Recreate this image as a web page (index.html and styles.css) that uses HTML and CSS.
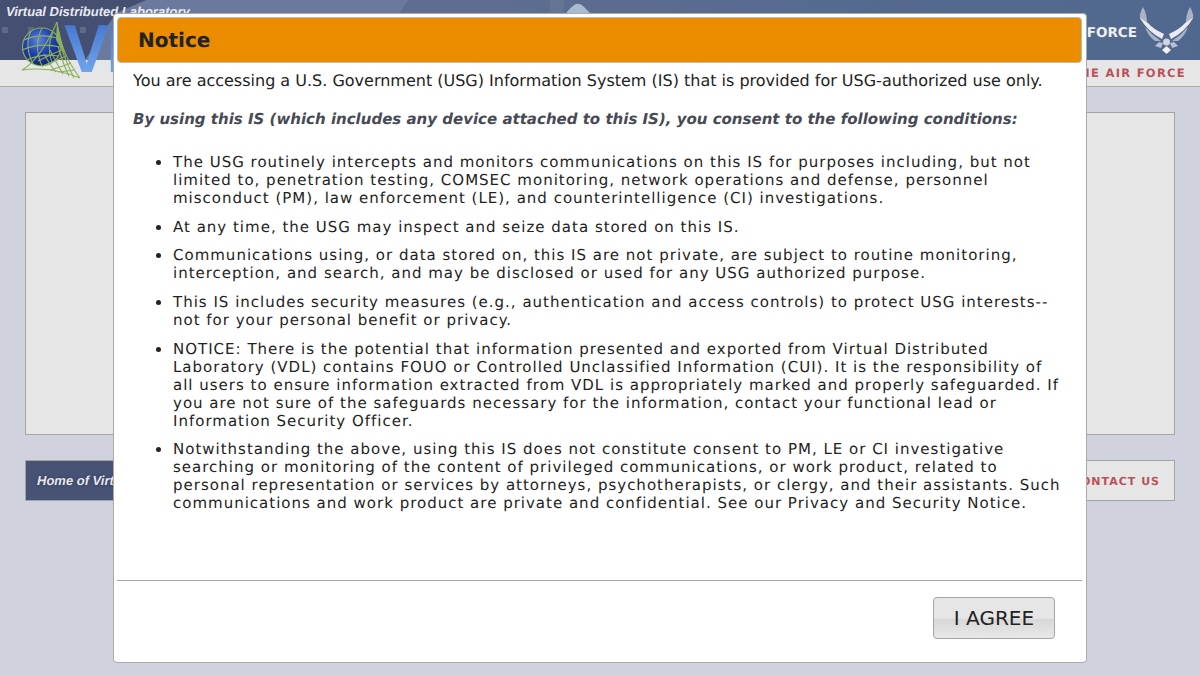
FILE: index.html
```html
<!DOCTYPE html>
<html lang="en">
<head>
<meta charset="utf-8">
<title>Virtual Distributed Laboratory</title>
<link rel="stylesheet" href="styles.css">
</head>
<body>
<header class="banner">
  <div class="banner-top">
    <svg class="banner-art" width="1200" height="60" viewBox="0 0 1200 60">
      <polygon points="146,0 408,0 370,60 85,60 116,13" fill="#6b7a9c"/>
      <polygon points="0,0 146,0 116,13 85,60 0,60" fill="#454f71"/>
      <rect x="550" y="0" width="14" height="13" fill="#ffffff" opacity="0.06"/>
      <path d="M566 13 Q572 6 576 4 Q580 3 583 6 L590 13 Z" fill="#a9bccf"/>
      <rect x="2" y="27" width="6" height="6" fill="#5d6786"/>
      <rect x="28" y="27" width="6" height="6" fill="#5d6786"/>
      <rect x="80" y="27" width="6" height="6" fill="#5d6786"/>
    </svg>
    <div class="site-name">Virtual Distributed Laboratory</div>
    <svg class="logo" width="113" height="87" viewBox="0 0 113 87">
      <defs>
        <radialGradient id="globe" cx="0.42" cy="0.32" r="0.75">
          <stop offset="0" stop-color="#5f86e0"/>
          <stop offset="0.45" stop-color="#2243b4"/>
          <stop offset="1" stop-color="#0e1f6a"/>
        </radialGradient>
        <linearGradient id="vee" x1="0" y1="0" x2="0" y2="1">
          <stop offset="0" stop-color="#3d6cc8"/>
          <stop offset="1" stop-color="#7ab2f4"/>
        </linearGradient>
      </defs>
      <text class="logo-word" x="64" y="72" fill="url(#vee)">VDL</text>
      <circle cx="41.5" cy="47" r="19" fill="url(#globe)"/>
      <g fill="none" stroke="#8db05a" stroke-width="1.1">
        <circle cx="41.5" cy="47" r="19"/>
        <path d="M31 31 Q24 46 33 64 M42 28 Q33 46 42 66 M53 32 Q46 48 52 62"/>
        <path d="M24 40 Q40 33 57 38 M22 50 Q40 42 60 47 M27 60 Q42 53 58 56"/>
        <path d="M22 70 Q50 66 80 78 M57 22 Q60 52 80 78"/>
        <path d="M22 70 Q40 60 57 22"/>
        <path d="M44 54 Q52 68 56 72 M50 50 Q58 66 63 74 M58 46 Q63 64 69 76 M62 50 Q68 66 74 78"/>
        <path d="M42 66 Q58 60 66 56 M50 70 Q64 66 71 63 M58 72 Q68 71 75 70 M38 61 Q52 54 62 50"/>
      </g>
      <path d="M57 22 Q61 40 66 56 Q58 44 56 40 Z" fill="#8db05a"/>
    </svg>
    <div class="brand">
      <span class="brand-word">FORCE</span>
      <svg class="wings" width="55" height="50" viewBox="0 0 55 50">
        <path d="M4 2 Q0 9 1 14 L8 18 Q8 9 4 2 Z" fill="#a8b4c6"/>
        <path d="M51 2 Q55 9 54 14 L47 18 Q47 9 51 2 Z" fill="#a8b4c6"/>
        <path d="M1 13 Q8 26 23 34 L25 29 Q14 24 9 18 Z" fill="#e9edf2"/>
        <path d="M54 13 Q47 26 32 34 L30 29 Q41 24 46 18 Z" fill="#e9edf2"/>
        <path d="M6 22 Q13 30 22 36 L16 36 Q9 31 6 22 Z" fill="#a8b4c6"/>
        <path d="M49 22 Q42 30 33 36 L39 36 Q46 31 49 22 Z" fill="#a8b4c6"/>
        <circle cx="27.5" cy="37" r="3.5" fill="#cfd6df"/>
        <path d="M24 38 L20 37 L16 41 L22 43 Z M31 38 L35 37 L39 41 L33 43 Z" fill="#b6c0ce"/>
        <path d="M27.5 41 L32 45 L27.5 49 L23 45 Z" fill="#eef1f5"/>
      </svg>
    </div>
  </div>
  <div class="banner-strip"><span class="strip-text">THE AIR FORCE</span></div>
</header>
<main class="page">
  <section class="content-box"></section>
  <footer class="footer">
    <div class="footer-home">Home of Virtual Distributed Laboratory</div>
    <div class="footer-contact">CONTACT US</div>
  </footer>
</main>
<div class="modal" role="dialog">
  <h1 class="modal-title">Notice</h1>
  <div class="modal-body">
    <p class="lead">You are accessing a U.S. Government (USG) Information System (IS) that is provided for USG-authorized use only.</p>
    <p class="consent">By using this IS (which includes any device attached to this IS), you consent to the following conditions:</p>
    <ul class="terms">
      <li>The USG routinely intercepts and monitors communications on this IS for purposes including, but not limited to, penetration testing, COMSEC monitoring, network operations and defense, personnel misconduct (PM), law enforcement (LE), and counterintelligence (CI) investigations.</li>
      <li>At any time, the USG may inspect and seize data stored on this IS.</li>
      <li>Communications using, or data stored on, this IS are not private, are subject to routine monitoring, interception, and search, and may be disclosed or used for any USG authorized purpose.</li>
      <li>This IS includes security measures (e.g., authentication and access controls) to protect USG interests--not for your personal benefit or privacy.</li>
      <li>NOTICE: There is the potential that information presented and exported from Virtual Distributed Laboratory (VDL) contains FOUO or Controlled Unclassified Information (CUI). It is the responsibility of all users to ensure information extracted from VDL is appropriately marked and properly safeguarded. If you are not sure of the safeguards necessary for the information, contact your functional lead or Information Security Officer.</li>
      <li>Notwithstanding the above, using this IS does not constitute consent to PM, LE or CI investigative searching or monitoring of the content of privileged communications, or work product, related to personal representation or services by attorneys, psychotherapists, or clergy, and their assistants. Such communications and work product are private and confidential. See our Privacy and Security Notice.</li>
    </ul>
  </div>
  <div class="modal-actions">
    <button class="agree" type="button">I AGREE</button>
  </div>
</div>
</body>
</html>
```
FILE: styles.css
```css
* { box-sizing: border-box; }
html, body { margin: 0; height: 100%; overflow: hidden; }
body {
  background: #d0d3dd; font-family: "DejaVu Sans", sans-serif; color: #222;
  text-rendering: geometricPrecision;
}

.banner { height: 87px; display: flex; flex-direction: column; }
.banner-top {
  height: 60px; display: flex; justify-content: flex-end; position: relative;
  background: linear-gradient(90deg, #5e6d90 0, #5e6d90 500px, #576a90 800px, #50688f 1200px);
}
.banner-art { position: absolute; left: 0; top: 0; }
.site-name {
  position: absolute; left: 6px; top: 4px;
  font: italic bold 13px "Liberation Sans", sans-serif; color: #e8ebf2;
}
.logo { position: absolute; left: 0; top: 0; }
.logo-word { font: bold 68px "Liberation Sans", sans-serif; letter-spacing: -3px; }
.brand { display: flex; align-items: flex-start; padding-right: 6px; position: relative; }
.brand-word { margin-top: 25px; font: bold 13.5px "DejaVu Sans", sans-serif; color: #eef0f4; }
.wings { margin-top: 5px; margin-left: 2px; }
.banner-strip {
  height: 27px; background: #e6e6e6; border-bottom: 1px solid #a8a8a8;
  display: flex; justify-content: flex-end; align-items: center; padding-right: 14px;
}
.strip-text { font-size: 11.5px; font-weight: bold; letter-spacing: 1.3px; color: #bb5158; }

.page { padding: 25px 25px 0; display: flex; flex-direction: column; gap: 25px; }
.content-box { height: 323px; background: #e6e6e6; border: 1px solid #a4a4a4; }
.footer { height: 41px; display: flex; border: 1px solid #a4a4a4; background: #e6e6e6; }
.footer-home {
  flex: 1; background: #475274; color: #e6e8ee; padding-left: 11px;
  font: italic bold 13px/39px "Liberation Sans", sans-serif;
  text-shadow: 0 0 3px #2c3554;
}
.footer-contact {
  width: 300px; text-align: right; padding-right: 14px;
  font-size: 11px; font-weight: bold; letter-spacing: 1px; line-height: 41px; color: #bb5158;
}

.modal {
  position: absolute; left: 113px; top: 13px; width: 974px; height: 650px;
  background: #fff; border: 1px solid #a9a9a9; border-radius: 4px;
  padding: 3px 4px 0 3px; display: flex; flex-direction: column;
}
.modal-title {
  margin: 0; height: 46px; padding-left: 20px;
  background: #ec8d00; border: 1px solid #b9b9b9; border-radius: 4px;
  font-size: 20px; font-weight: bold; line-height: 44px; color: #222;
}
.modal-body { flex: 1; padding: 0 16px; }
.lead { margin: 8px 0 0; font-size: 16px; line-height: 20px; color: #222; }
.consent {
  margin: 18px 0 0; font-size: 15px; line-height: 20px; font-weight: bold; font-style: italic;
  color: #474a55;
}
.terms { margin: 24px 0 0; padding: 0 0 0 40px; }
.terms li { font-size: 15px; line-height: 18px; letter-spacing: 1px; margin-bottom: 10.7px; color: #222; }
.terms li::marker { font-size: 18px; }
.modal-actions {
  flex: none; height: 82px; border-top: 1px solid #a9a9a9;
  display: flex; justify-content: flex-end; align-items: flex-start;
  padding: 16px 27px 0 0;
}
.agree {
  width: 122px; height: 42px; padding: 0; font: 20px "DejaVu Sans", sans-serif; color: #222;
  border: 1px solid #a4a4a4; border-radius: 4px;
  background: linear-gradient(#e6e6e6 0, #e6e6e6 50%, #d8d8d8 54%, #e8e8e8 100%);
}
```
